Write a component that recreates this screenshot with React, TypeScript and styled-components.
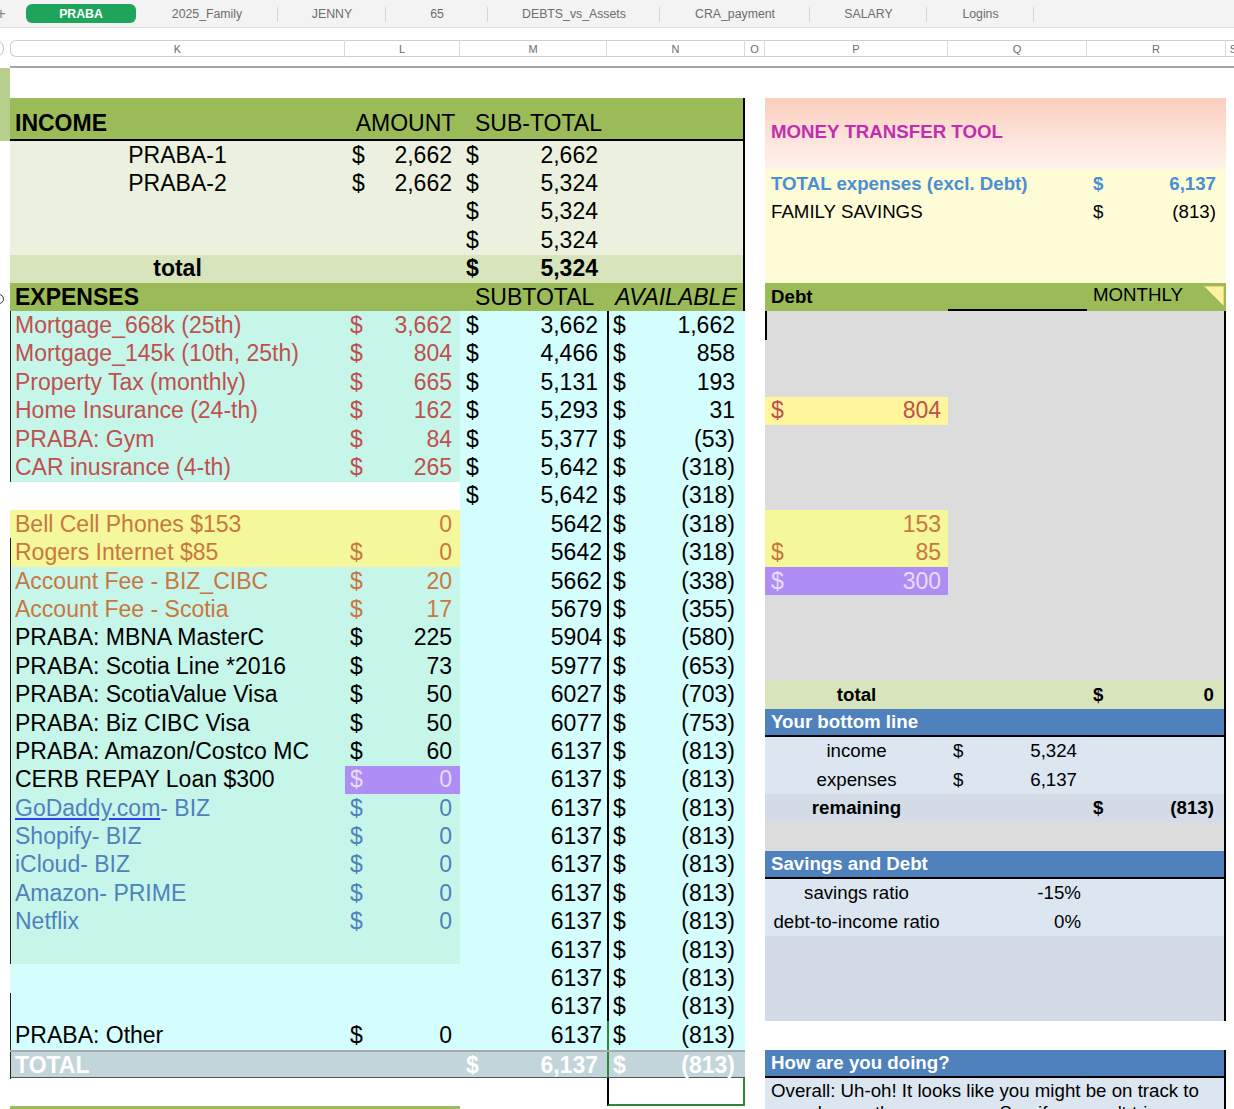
import React from 'react';
import styled, { createGlobalStyle, css } from 'styled-components';

const RH = 28.4;

const C = {
  green: '#9bbb59',
  incomeBg: '#ebf1de',
  totalBg: '#d7e4bc',
  mint: '#c6f6ea',
  cyan: '#d4fdfd',
  yellow: '#f5f79b',
  brightYellow: '#fff59b',
  purple: '#ae8ef5',
  lavender: '#e8ddfb',
  red: '#c0504d',
  orange: '#c8773e',
  blue: '#4f81bd',
  magenta: '#c22db0',
  skyText: '#4a8fd0',
  paleYellow: '#fefcd7',
  gray: '#dcdcdc',
  headerBlue: '#4f81bd',
  rowBlue: '#dce6f1',
  rowBlue2: '#d3dce6',
  totalBar: '#c2d5da',
};

const GlobalStyle = createGlobalStyle`
  html, body { margin: 0; padding: 0; overflow: hidden; background: #fff; }
  body { font-family: "Liberation Sans", Arial, Helvetica, sans-serif; color: #000; }
  #root { width: 1234px; height: 1109px; overflow: hidden; }
`;

/* ---------- sheet tabs ---------- */
const TabBar = styled.div`
  display: flex;
  align-items: center;
  height: 28px;
  box-sizing: border-box;
  background: #f3f3f3;
  border-bottom: 1px solid #dadada;
  font-size: 12.3px;
`;
const AddButton = styled.div`
  width: 26px;
  flex-shrink: 0;
  font-size: 17px;
  color: #8a8a8a;
  text-indent: -4px;
  line-height: 27px;
`;
const ActiveTab = styled.div`
  width: 110px;
  height: 19px;
  flex-shrink: 0;
  border-radius: 6px;
  background: #1ea55b;
  color: #fff;
  font-weight: 700;
  display: flex;
  align-items: center;
  justify-content: center;
`;
const Tab = styled.div<{ $w: number }>`
  position: relative;
  width: ${(p) => p.$w}px;
  flex-shrink: 0;
  text-align: center;
  color: #6d6d6d;
  &::after {
    content: '';
    position: absolute;
    right: 0;
    top: 0;
    height: 15px;
    width: 1px;
    background: #d6d6d6;
  }
`;

/* ---------- column headers ---------- */
const ColumnHeaderBar = styled.div`
  display: flex;
  height: 17px;
  margin-top: 12px;
  font-size: 11px;
  color: #6b6b6b;
`;
const CornerSlot = styled.div`
  width: 10px;
  flex-shrink: 0;
  overflow: hidden;
  display: flex;
  justify-content: flex-end;
`;
const CornerKnob = styled.div`
  flex-shrink: 0;
  width: 14px;
  height: 15px;
  margin-right: 6px;
  border: 1px solid #bdbdbd;
  border-radius: 8px;
`;
const ColHead = styled.div<{ $w: number; $first?: boolean }>`
  width: ${(p) => p.$w}px;
  flex-shrink: 0;
  box-sizing: border-box;
  border-top: 1px solid #cfcfcf;
  border-bottom: 1px solid #cfcfcf;
  border-right: 1px solid #dadada;
  display: flex;
  align-items: center;
  justify-content: center;
  ${(p) =>
    p.$first &&
    css`
      border-left: 1px solid #cfcfcf;
      border-radius: 6px 0 0 6px;
    `}
`;

/* ---------- sheet body ---------- */
const SheetBody = styled.div`
  display: flex;
  margin-top: 9px;
`;
const Gutter = styled.div`
  width: 10px;
  flex-shrink: 0;
  overflow: hidden;
  display: flex;
  flex-direction: column;
  padding-top: 2px;
`;
const GutterBand = styled.div`
  height: 73px;
  background: #b6cf8c;
`;
const GroupToggle = styled.div`
  margin-top: 153px;
  margin-left: -6px;
  width: 8px;
  height: 8px;
  border: 1.5px solid #333;
  border-radius: 50%;
`;
const Content = styled.div`
  flex: 1;
  min-width: 0;
  display: flex;
  flex-direction: column;
`;
const FreezeLine = styled.div`
  height: 2px;
  background: #a5a5a5;
`;
const TopBlank = styled.div`
  height: 30px;
`;
const Panels = styled.div`
  display: flex;
  align-items: flex-start;
`;
const LeftTable = styled.div`
  width: 735px;
  flex-shrink: 0;
  font-size: 23px;
`;
const ColumnO = styled.div`
  width: 20px;
  flex-shrink: 0;
`;
const RightPanel = styled.div`
  width: 461px;
  flex-shrink: 0;
  font-size: 18.7px;
`;

/* ---------- cells ---------- */
type Align = 'left' | 'center' | 'right' | 'between';
const justify: Record<Align, string> = {
  left: 'flex-start',
  center: 'center',
  right: 'flex-end',
  between: 'space-between',
};
interface CellProps {
  $bg?: string;
  $color?: string;
  $bold?: boolean;
  $italic?: boolean;
  $align?: Align;
  $pl?: number;
  $pr?: number;
  $span?: number;
  $edge?: string;
}
const Cell = styled.div<CellProps>`
  display: flex;
  align-items: center;
  min-width: 0;
  white-space: nowrap;
  box-sizing: border-box;
  background: ${(p) => p.$bg ?? 'transparent'};
  color: ${(p) => p.$color ?? 'inherit'};
  font-weight: ${(p) => (p.$bold ? 700 : 'inherit')};
  font-style: ${(p) => (p.$italic ? 'italic' : 'inherit')};
  justify-content: ${(p) => justify[p.$align ?? 'left']};
  padding: 0 ${(p) => p.$pr ?? 0}px 0 ${(p) => p.$pl ?? 0}px;
  ${(p) => p.$span && css`grid-column: span ${p.$span};`}
  ${(p) => p.$edge && css`box-shadow: inset ${p.$edge};`}
`;
const LabelCell = styled(Cell)`
  padding-left: ${(p) => p.$pl ?? 5}px;
`;
const MoneyCell = styled(Cell)`
  justify-content: space-between;
`;
const DebtMoneyCell = styled(MoneyCell)`
  font-size: 23px;
`;
const HeadLabel = styled(Cell)`
  align-items: flex-end;
  padding-bottom: 2px;
`;

const Money: React.FC<CellProps & { sign?: string; value?: string }> = ({ sign, value, ...rest }) => (
  <MoneyCell {...rest}>
    <span>{sign ?? ''}</span>
    <span>{value ?? ''}</span>
  </MoneyCell>
);

/* ---------- left table rows ---------- */
const LGrid = styled.div<{ $h?: number; $bg?: string }>`
  display: grid;
  grid-template-columns: 335px 115px 147px 1fr;
  height: ${(p) => p.$h ?? RH}px;
  box-sizing: border-box;
  background: ${(p) => p.$bg ?? 'transparent'};
`;
const IncomeBlock = styled.div`
  border-right: 2px solid #000;
`;
const IncomeHeader = styled(LGrid)`
  border-bottom: 2px solid #000;
`;
const TotalBar = styled(LGrid)`
  border-top: 2px solid #a8a8a8;
  border-bottom: 1px solid #555;
  color: #fff;
  font-weight: 700;
`;
const SelectedCell = styled.div`
  grid-column: 4;
  box-sizing: border-box;
  border: 2px solid #2a8a35;
  border-left-color: #000;
  border-top: none;
`;
const NextHeaderStrip = styled.div`
  grid-column: span 2;
  background: ${C.green};
`;
const GoDaddyLink = styled.span`
  text-decoration: underline;
  text-decoration-color: #2540f0;
  text-underline-offset: 2px;
`;

/* ---------- right panel rows ---------- */
const RGrid = styled.div<{ $h?: number; $bg?: string }>`
  display: grid;
  grid-template-columns: 183px 139px 1fr;
  height: ${(p) => p.$h ?? RH}px;
  box-sizing: border-box;
  background: ${(p) => p.$bg ?? 'transparent'};
`;
const TitleBand = styled.div`
  height: ${43 + RH}px;
  background: linear-gradient(180deg, #fbcdbd 0%, #fde5db 60%, #fef2ec 100%);
  display: flex;
  align-items: center;
  padding: 0 6px 4px;
  box-sizing: border-box;
  color: ${C.magenta};
  font-weight: 700;
`;
const BoxedBlock = styled.div`
  border-right: 2px solid #000;
`;
const BlueHeader = styled.div`
  height: ${RH}px;
  box-sizing: border-box;
  background: ${C.headerBlue};
  border-bottom: 2px solid #000;
  color: #fff;
  font-weight: 700;
  display: flex;
  align-items: center;
  padding-left: 6px;
`;
const CommentMarker = styled.svg`
  position: absolute;
  top: 3px;
  right: 2px;
`;
const MonthlyCell = styled(Cell)`
  position: relative;
  align-items: flex-start;
  padding-top: 1px;
`;
const DebtRule = styled.div`
  border-bottom: 2px solid #000;
`;
const Paragraph = styled.div`
  background: ${C.rowBlue};
  line-height: 22px;
  padding: 2px 8px 0 6px;
`;

/* ---------- data ---------- */
type Tone = 'red' | 'orange' | 'black' | 'blue';
const toneColor: Record<Tone, string> = { red: C.red, orange: C.orange, black: '#000', blue: C.blue };
type KL = 'mint' | 'yellow' | 'white' | 'cyan';
const klColor: Record<KL, string> = { mint: C.mint, yellow: C.yellow, white: '#fff', cyan: C.cyan };

interface Expense {
  label?: React.ReactNode;
  tone?: Tone;
  kl: KL;
  l?: { sign?: string; value: string; bg?: string; color?: string };
  m: { sign?: string; value: string };
  n: string;
  edge?: boolean;
  nLine?: string;
}

const red = (label: string, l: string, m: string, n: string): Expense => ({
  label, tone: 'red', kl: 'mint', l: { sign: '$', value: l }, m: { sign: '$', value: m }, n, edge: true,
});
const plain = (label: React.ReactNode, tone: Tone, l: string, m: string, n: string): Expense => ({
  label, tone, kl: 'mint', l: { sign: '$', value: l }, m: { value: m }, n, edge: true,
});

const expenses: Expense[] = [
  red('Mortgage_668k (25th)', '3,662', '3,662', '1,662'),
  red('Mortgage_145k (10th, 25th)', '804', '4,466', '858'),
  red('Property Tax (monthly)', '665', '5,131', '193'),
  red('Home Insurance (24-th)', '162', '5,293', '31'),
  red('PRABA: Gym', '84', '5,377', '(53)'),
  red('CAR inusrance (4-th)', '265', '5,642', '(318)'),
  { kl: 'white', m: { sign: '$', value: '5,642' }, n: '(318)' },
  { label: 'Bell Cell Phones $153', tone: 'orange', kl: 'yellow', l: { value: '0' }, m: { value: '5642' }, n: '(318)' },
  { label: 'Rogers Internet $85', tone: 'orange', kl: 'yellow', l: { sign: '$', value: '0' }, m: { value: '5642' }, n: '(318)', edge: true },
  plain('Account Fee - BIZ_CIBC', 'orange', '20', '5662', '(338)'),
  plain('Account Fee - Scotia', 'orange', '17', '5679', '(355)'),
  plain('PRABA: MBNA MasterC', 'black', '225', '5904', '(580)'),
  plain('PRABA: Scotia Line *2016', 'black', '73', '5977', '(653)'),
  plain('PRABA: ScotiaValue Visa', 'black', '50', '6027', '(703)'),
  plain('PRABA: Biz CIBC Visa', 'black', '50', '6077', '(753)'),
  plain('PRABA: Amazon/Costco MC', 'black', '60', '6137', '(813)'),
  {
    label: 'CERB REPAY Loan $300', tone: 'black', kl: 'mint',
    l: { sign: '$', value: '0', bg: C.purple, color: C.lavender }, m: { value: '6137' }, n: '(813)', edge: true,
  },
  plain(<><GoDaddyLink>GoDaddy.com</GoDaddyLink>- BIZ</>, 'blue', '0', '6137', '(813)'),
  plain('Shopify- BIZ', 'blue', '0', '6137', '(813)'),
  plain('iCloud- BIZ', 'blue', '0', '6137', '(813)'),
  plain('Amazon- PRIME', 'blue', '0', '6137', '(813)'),
  plain('Netflix', 'blue', '0', '6137', '(813)'),
  { kl: 'mint', m: { value: '6137' }, n: '(813)', edge: true },
  { kl: 'cyan', m: { value: '6137' }, n: '(813)' },
  { kl: 'cyan', m: { value: '6137' }, n: '(813)', edge: true },
  {
    label: 'PRABA: Other', tone: 'black', kl: 'cyan', l: { sign: '$', value: '0' },
    m: { value: '6137' }, n: '(813)', edge: true, nLine: '#2a8a35',
  },
];

interface DebtSlot { sign?: string; value: string; bg: string; color: string }
const debtRows: (DebtSlot | null)[] = [
  null, null, null,
  { sign: '$', value: '804', bg: C.brightYellow, color: C.red },
  null, null, null,
  { value: '153', bg: C.yellow, color: C.orange },
  { sign: '$', value: '85', bg: C.yellow, color: C.orange },
  { sign: '$', value: '300', bg: C.purple, color: C.lavender },
  null, null, null,
];

const tabs = [
  { label: '2025_Family', w: 142 },
  { label: 'JENNY', w: 108 },
  { label: '65', w: 102 },
  { label: 'DEBTS_vs_Assets', w: 172 },
  { label: 'CRA_payment', w: 150 },
  { label: 'SALARY', w: 117 },
  { label: 'Logins', w: 107 },
];
const columns: [string, number][] = [
  ['K', 335], ['L', 115], ['M', 147], ['N', 138], ['O', 20], ['P', 183], ['Q', 139], ['R', 139], ['S', 16],
];

const EDGE = '1px 0 0 #222';

const ExpenseRow: React.FC<{ e: Expense }> = ({ e }) => {
  const tc = toneColor[e.tone ?? 'black'];
  const bg = klColor[e.kl];
  const mHasSign = !!e.m.sign;
  return (
    <LGrid>
      <LabelCell $bg={bg} $color={tc} $edge={e.edge ? EDGE : undefined}>{e.label}</LabelCell>
      <Money
        $bg={e.l?.bg ?? bg}
        $color={e.l?.color ?? tc}
        $pl={5}
        $pr={8}
        sign={e.l?.sign}
        value={e.l?.value}
      />
      <Money $bg={C.cyan} $pl={6} $pr={mHasSign ? 9 : 5} sign={e.m.sign} value={e.m.value} />
      <Money $bg={C.cyan} $pl={6} $pr={10} $edge={`2px 0 0 ${e.nLine ?? '#000'}`} sign="$" value={e.n} />
    </LGrid>
  );
};

const IncomeRow: React.FC<{ label?: string; amount?: string; sub: string }> = ({ label, amount, sub }) => (
  <LGrid $bg={C.incomeBg}>
    <LabelCell $align="center" $pl={0}>{label}</LabelCell>
    <Money $pl={7} $pr={8} sign={amount ? '$' : ''} value={amount} />
    <Money $pl={6} $pr={9} sign="$" value={sub} />
    <Cell />
  </LGrid>
);

export default function App() {
  return (
    <>
      <GlobalStyle />
      <TabBar>
        <AddButton>+</AddButton>
        <ActiveTab>PRABA</ActiveTab>
        {tabs.map((t) => (
          <Tab key={t.label} $w={t.w}>{t.label}</Tab>
        ))}
      </TabBar>

      <ColumnHeaderBar>
        <CornerSlot>
          <CornerKnob />
        </CornerSlot>
        {columns.map(([l, w], i) => (
          <ColHead key={l} $w={w} $first={i === 0}>{l}</ColHead>
        ))}
      </ColumnHeaderBar>

      <SheetBody>
        <Gutter>
          <GutterBand />
          <GroupToggle />
        </Gutter>
        <Content>
          <FreezeLine />
          <TopBlank />
          <Panels>
            <LeftTable>
              <IncomeBlock>
                <IncomeHeader $h={43} $bg={C.green}>
                  <HeadLabel $bold $pl={5}>INCOME</HeadLabel>
                  <HeadLabel $align="center" $pl={6}>AMOUNT</HeadLabel>
                  <HeadLabel $pl={15}>SUB-TOTAL</HeadLabel>
                  <HeadLabel />
                </IncomeHeader>
                <IncomeRow label="PRABA-1" amount="2,662" sub="2,662" />
                <IncomeRow label="PRABA-2" amount="2,662" sub="5,324" />
                <IncomeRow sub="5,324" />
                <IncomeRow sub="5,324" />
                <LGrid $bg={C.totalBg}>
                  <LabelCell $align="center" $pl={0} $bold>total</LabelCell>
                  <Cell />
                  <Money $bold $pl={6} $pr={9} sign="$" value="5,324" />
                  <Cell />
                </LGrid>
                <LGrid $bg={C.green}>
                  <LabelCell $bold>EXPENSES</LabelCell>
                  <Cell />
                  <Cell $pl={15}>SUBTOTAL</Cell>
                  <Cell $italic $align="center" $pl={2}>AVAILABLE</Cell>
                </LGrid>
              </IncomeBlock>

              {expenses.map((e, i) => (
                <ExpenseRow key={i} e={e} />
              ))}

              <TotalBar $bg={C.totalBar}>
                <LabelCell $edge={EDGE}>TOTAL</LabelCell>
                <Cell />
                <Money $pl={6} $pr={9} sign="$" value="6,137" />
                <Money $pl={6} $pr={10} $edge="2px 0 0 #2a8a35" sign="$" value="(813)" />
              </TotalBar>
              <LGrid>
                <SelectedCell />
              </LGrid>
              <LGrid>
                <NextHeaderStrip />
              </LGrid>
            </LeftTable>

            <ColumnO />

            <RightPanel>
              <TitleBand>MONEY TRANSFER TOOL</TitleBand>
              <RGrid $bg={C.paleYellow}>
                <Cell $span={2} $pl={6} $bold $color={C.skyText}>TOTAL expenses (excl. Debt)</Cell>
                <Money $bold $color={C.skyText} $pl={6} $pr={10} sign="$" value="6,137" />
              </RGrid>
              <RGrid $bg={C.paleYellow}>
                <Cell $span={2} $pl={6}>FAMILY SAVINGS</Cell>
                <Money $pl={6} $pr={10} sign="$" value="(813)" />
              </RGrid>
              <RGrid $bg={C.paleYellow} />
              <RGrid $bg={C.paleYellow} />
              <RGrid $bg={C.green}>
                <Cell $bold $pl={6}>Debt</Cell>
                <DebtRule />
                <MonthlyCell $pl={6}>
                  MONTHLY
                  <CommentMarker width="20" height="20" viewBox="0 0 20 20">
                    <path d="M0.5 0.5 H19.5 V19.5 Z" fill="#fff3a3" stroke="#e9d66c" strokeWidth="1" />
                  </CommentMarker>
                </MonthlyCell>
              </RGrid>

              <BoxedBlock>
                {debtRows.map((d, i) => (
                  <RGrid key={i} $bg={C.gray}>
                    {d ? (
                      <DebtMoneyCell $bg={d.bg} $color={d.color} $pl={6} $pr={7}>
                        <span>{d.sign ?? ''}</span>
                        <span>{d.value}</span>
                      </DebtMoneyCell>
                    ) : (
                      <Cell $edge={i === 0 ? '2px 0 0 #000' : undefined} />
                    )}
                  </RGrid>
                ))}
                <RGrid $bg={C.totalBg}>
                  <Cell $bold $align="center">total</Cell>
                  <Cell />
                  <Money $bold $pl={6} $pr={10} sign="$" value="0" />
                </RGrid>
                <BlueHeader>Your bottom line</BlueHeader>
                <RGrid $bg={C.rowBlue}>
                  <Cell $align="center">income</Cell>
                  <Money $pl={5} $pr={10} sign="$" value="5,324" />
                </RGrid>
                <RGrid $bg={C.rowBlue}>
                  <Cell $align="center">expenses</Cell>
                  <Money $pl={5} $pr={10} sign="$" value="6,137" />
                </RGrid>
                <RGrid $bg={C.rowBlue2}>
                  <Cell $bold $align="center">remaining</Cell>
                  <Cell />
                  <Money $bold $pl={6} $pr={10} sign="$" value="(813)" />
                </RGrid>
                <RGrid $bg={C.gray} />
                <BlueHeader>Savings and Debt</BlueHeader>
                <RGrid $bg={C.rowBlue}>
                  <Cell $align="center">savings ratio</Cell>
                  <Cell $align="right" $pr={6}>-15%</Cell>
                </RGrid>
                <RGrid $bg={C.rowBlue}>
                  <Cell $align="center">debt-to-income ratio</Cell>
                  <Cell $align="right" $pr={6}>0%</Cell>
                </RGrid>
                <RGrid $bg={C.rowBlue2} />
                <RGrid $bg={C.rowBlue2} />
                <RGrid $bg={C.rowBlue2} />
              </BoxedBlock>
              <RGrid />
              <BoxedBlock>
                <BlueHeader>How are you doing?</BlueHeader>
                <Paragraph>
                  Overall: Uh-oh! It looks like you might be on track to spend more than you earn. See if you
                  can't trim some expenses.
                </Paragraph>
              </BoxedBlock>
            </RightPanel>
          </Panels>
        </Content>
      </SheetBody>
    </>
  );
}
